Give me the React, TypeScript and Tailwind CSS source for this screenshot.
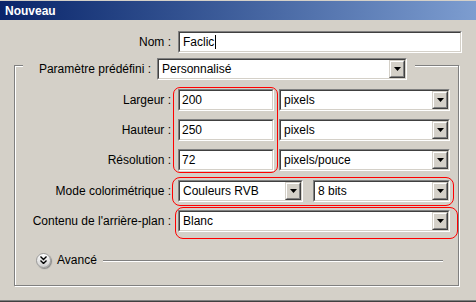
import React from "react";

type BoxProps = { className: string; children?: React.ReactNode };

// sunken win2k-style edit box
const Sunken = ({ className, children }: BoxProps) => {
  return (
    <div
      className={`h-[22px] shrink-0 border border-t-[#808080] border-l-[#808080] border-b-white border-r-white ${className}`}
    >
      <div className="flex h-full items-center border border-t-[#404040] border-l-[#404040] border-b-[#d4d0c8] border-r-[#d4d0c8] bg-white">
        {children}
      </div>
    </div>
  );
};

const DropButton = () => {
  return (
    <div className="h-full w-[16px] border border-t-[#d4d0c8] border-l-[#d4d0c8] border-b-[#404040] border-r-[#404040] bg-[#d4d0c8]">
      <div className="flex h-full items-center justify-center border border-t-white border-l-white border-b-[#808080] border-r-[#808080]">
        <svg width="7" height="4" viewBox="0 0 7 4">
          <polygon points="0,0 7,0 3.5,4" fill="#000" />
        </svg>
      </div>
    </div>
  );
};

const Select = ({ className, value }: { className: string; value: string }) => {
  return (
    <Sunken className={className}>
      <span className="flex-1 truncate pl-[3px]">{value}</span>
      <DropButton />
    </Sunken>
  );
};

const Label = ({ children }: { children: React.ReactNode }) => (
  <span className="w-[156px] shrink-0 text-right">{children}</span>
);

const App = () => {
  return (
    <div className="relative h-[302px] w-[476px] overflow-hidden bg-[#d4d0c8] font-['Liberation_Sans',Arial,sans-serif] text-[12px] text-black">
      {/* title bar */}
      <div className="mt-[1px] flex h-[19px] items-center bg-gradient-to-r from-[#0a246a] to-[#7d9dd0] pl-[5px] text-[12px] font-bold text-white">
        Nouveau
      </div>

      {/* nom */}
      <div className="mt-[11px] flex items-center">
        <span className="w-[171px] shrink-0 text-right">Nom :</span>
        <Sunken className="ml-[7px] w-[284px]">
          <span className="pl-[3px]">Faclic</span>
          <span className="ml-[1px] h-[14px] w-[1px] bg-black" />
        </Sunken>
      </div>

      {/* group box */}
      <div className="mt-[12px] ml-[14px] w-[445px] border border-[#808080] pb-[17px] shadow-[1px_1px_0_white,inset_1px_1px_0_white]">
        <div className="-mt-[8px] ml-[8px] flex w-[392px] items-center bg-[#d4d0c8] pr-[7px] pl-[13px]">
          <span className="w-[115px] shrink-0 text-right">Paramètre prédéfini :</span>
          <Select className="ml-[6px] w-[250px]" value="Personnalisé" />
        </div>

        <div className="mt-[9px] flex flex-col gap-[8px]">
          <div className="flex items-center">
            <Label>Largeur :</Label>
            <Sunken className="ml-[7px] w-[96px]">
              <span className="pl-[2px]">200</span>
            </Sunken>
            <Select className="ml-[5px] w-[171px]" value="pixels" />
          </div>
          <div className="flex items-center">
            <Label>Hauteur :</Label>
            <Sunken className="ml-[7px] w-[96px]">
              <span className="pl-[2px]">250</span>
            </Sunken>
            <Select className="ml-[5px] w-[171px]" value="pixels" />
          </div>
          <div className="flex items-center">
            <Label>Résolution :</Label>
            <Sunken className="ml-[7px] w-[96px]">
              <span className="pl-[2px]">72</span>
            </Sunken>
            <Select className="ml-[5px] w-[171px]" value="pixels/pouce" />
          </div>
          <div className="mt-[1px] flex items-center">
            <Label>Mode colorimétrique :</Label>
            <Select className="ml-[7px] w-[125px]" value="Couleurs RVB" />
            <Select className="ml-[10px] w-[137px]" value="8 bits" />
          </div>
          <div className="flex items-center">
            <Label>Contenu de l'arrière-plan :</Label>
            <Select className="ml-[7px] w-[272px]" value="Blanc" />
          </div>
        </div>

        {/* avancé */}
        <div className="mt-[20px] ml-[21px] mr-[15px] flex h-[16px] items-center">
          <div className="flex h-[15px] w-[15px] items-center justify-center rounded-full border border-[#9a9a9a] bg-gradient-to-b from-white to-[#cfcfcf] shadow-[1px_1px_1px_#8a8a8a]">
            <svg width="7" height="8" viewBox="0 0 7 8">
              <polyline points="0.5,0.5 3.5,3.5 6.5,0.5" fill="none" stroke="#000" strokeWidth="1.4" />
              <polyline points="0.5,4.5 3.5,7.5 6.5,4.5" fill="none" stroke="#000" strokeWidth="1.4" />
            </svg>
          </div>
          <span className="ml-[6px]">Avancé</span>
          <div className="ml-[6px] h-0 flex-1 border-t border-[#808080] shadow-[0_1px_0_white]" />
        </div>
      </div>

      {/* window bottom edge */}
      <div className="absolute bottom-0 left-0 h-[2px] w-full border-t border-[#808080] bg-[#404040]" />

      {/* red annotations */}
      <div className="absolute top-[87px] left-[173px] h-[86px] w-[105px] rounded-[7px] border border-[#ff0000]" />
      <div className="absolute top-[177px] left-[172px] h-[29px] w-[282px] rounded-[8px] border border-[#ff0000]" />
      <div className="absolute top-[207px] left-[175px] h-[32px] w-[283px] rounded-[8px] border border-[#ff0000]" />
    </div>
  );
};

export default App;
